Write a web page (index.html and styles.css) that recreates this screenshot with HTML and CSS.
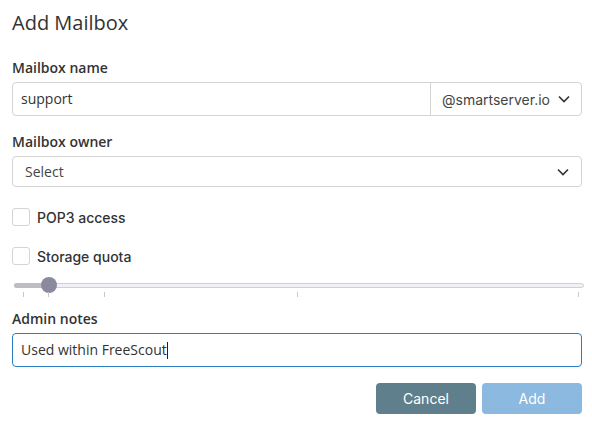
FILE: index.html
```html
<!DOCTYPE html>
<html>
<head>
<meta charset="utf-8">
<link rel="stylesheet" href="styles.css">
</head>
<body>
<div class="dialog">
  <h1 class="title">Add Mailbox</h1>

  <div class="field">
    <label class="label">Mailbox name</label>
    <div class="group">
      <div class="input grow">support</div>
      <div class="domain">@smartserver.io
        <svg class="chev" width="12" height="8" viewBox="0 0 12 8"><path d="M1 1.5 L6 6.5 L11 1.5" fill="none" stroke="#333" stroke-width="1.6"/></svg>
      </div>
    </div>
  </div>

  <div class="field">
    <label class="label">Mailbox owner</label>
    <div class="select">
      <span>Select</span>
      <svg class="chev" width="12" height="8" viewBox="0 0 12 8"><path d="M1 1.5 L6 6.5 L11 1.5" fill="none" stroke="#333" stroke-width="1.6"/></svg>
    </div>
  </div>

  <div class="check"><span class="box"></span><span>POP3 access</span></div>
  <div class="check"><span class="box"></span><span>Storage quota</span></div>

  <div class="slider">
    <div class="track"><div class="fill"></div><div class="thumb"></div></div>
    <div class="ticks">
      <span class="tick" style="left:9px"></span>
      <span class="tick" style="left:34px"></span>
      <span class="tick" style="left:90px"></span>
      <span class="tick" style="left:283px"></span>
      <span class="tick" style="left:564px"></span>
    </div>
  </div>

  <div class="field">
    <label class="label">Admin notes</label>
    <div class="input focus">Used within FreeScout<span class="caret"></span></div>
  </div>

  <div class="actions">
    <button class="btn cancel">Cancel</button>
    <button class="btn add">Add</button>
  </div>
</div>
</body>
</html>
```

FILE: styles.css
```css
* { box-sizing: border-box; }
html, body { margin: 0; padding: 0; background: #fff; }
body { font-family: "Open Sans", sans-serif; color: #333; }
.dialog { width: 592px; padding: 9px 10px 0 12px; }
.title { margin: 0 0 21px; font-family: "Open Sans", sans-serif; font-weight: 400; font-size: 20px; line-height: 28px; color: #333; }
.field { margin-bottom: 16px; }
.label { display: block; font-family: "Open Sans", sans-serif; font-weight: 600; font-size: 14px; line-height: 19px; margin-bottom: 5px; color: #333; }
.group { display: flex; border: 1px solid #d4d4d4; border-radius: 4px; height: 34px; }
.input { height: 34px; border: 1px solid #d4d4d4; border-radius: 4px; padding: 0 8px; font-size: 14px; line-height: 32px; color: #333; display: flex; align-items: center; }
.group .input { border: none; height: 32px; flex: 1; }
.domain { width: 151px; border-left: 1px solid #d4d4d4; display: flex; align-items: center; justify-content: space-between; padding: 0 11px 0 11px; font-family: Inter, sans-serif; font-size: 14px; color: #444; }
.select { height: 31px; border: 1px solid #d4d4d4; border-radius: 4px; display: flex; align-items: center; justify-content: space-between; padding: 0 12px 0 12px; font-family: "Open Sans", sans-serif; font-size: 14px; color: #444; }
.check { display: flex; align-items: center; gap: 7px; font-family: Inter, sans-serif; font-weight: 500; font-size: 14px; color: #333; height: 18px; margin: 21px 0 0; }
.box { width: 18px; height: 18px; border: 1px solid #d4d4d4; border-radius: 3px; background: #fff; }
.slider { position: relative; height: 28px; margin: 15px 0 1px 2px; }
.track { position: relative; height: 5px; top: 3px; width: 570px; border: 1px solid #cfcfd6; border-radius: 3px; background: #f1f1f5; }
.fill { position: absolute; left: -1px; top: -1px; height: 5px; width: 36px; background: #bdbdc2; border-radius: 3px 0 0 3px; }
.thumb { position: absolute; left: 26px; top: -7px; width: 16px; height: 16px; border-radius: 50%; background: #8a8a9e; }
.ticks { position: absolute; left: 0; top: 12px; width: 570px; height: 6px; }
.tick { position: absolute; top: 0; width: 1px; height: 5px; background: #c8c8d0; }
.input.focus { border-color: #2a7fc4; color: #333; height: 34px; }
.caret { display: inline-block; width: 1px; height: 17px; background: #222; margin-left: 0; }
.actions { display: flex; justify-content: flex-end; gap: 6px; margin-top: 0; }
.btn { width: 100px; height: 31px; border: none; border-radius: 4px; font-family: Inter, sans-serif; font-size: 14px; color: #fff; }
.cancel { background: #5f7f8d; }
.add { background: #8cb9e0; }
```
